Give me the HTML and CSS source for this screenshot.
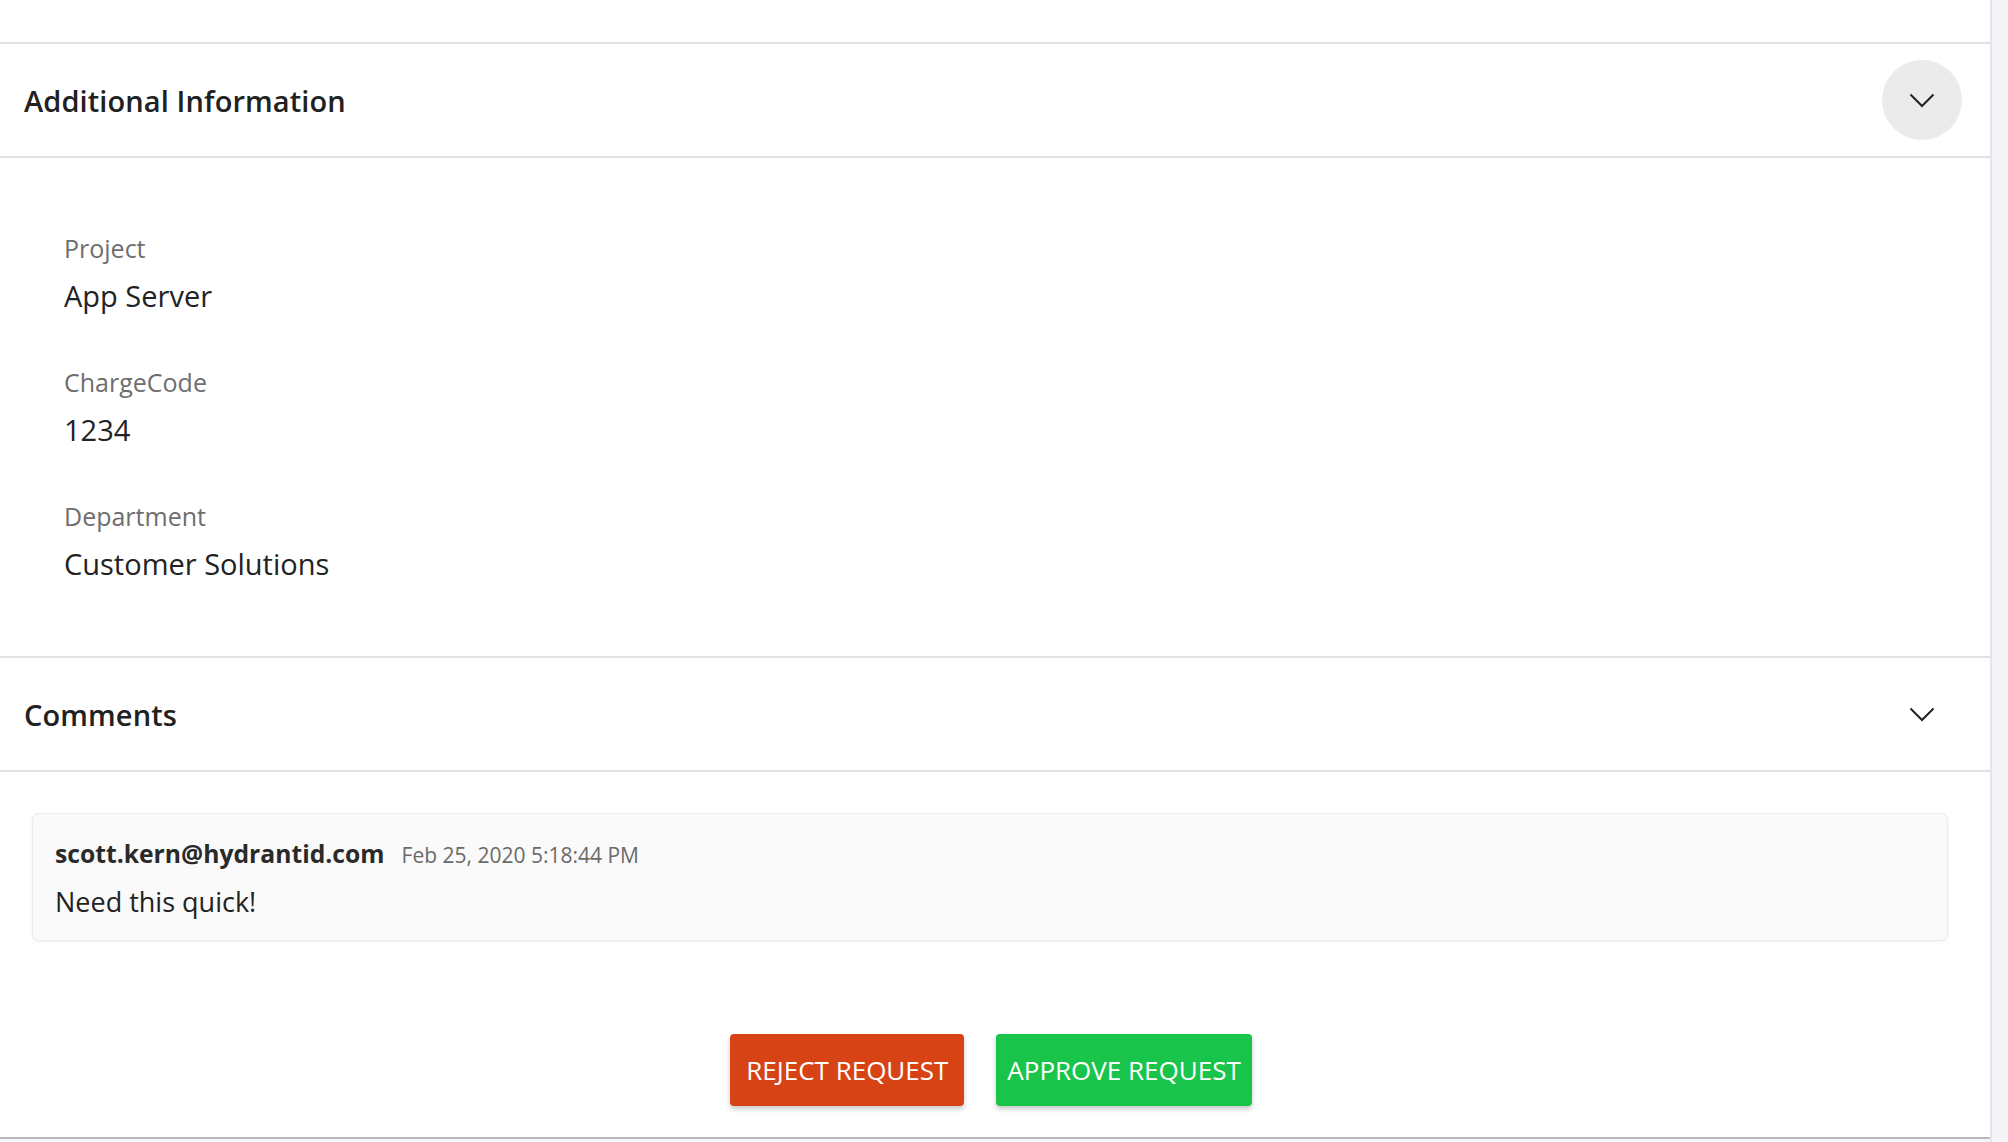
FILE: index.html
```html
<!DOCTYPE html>
<html lang="en">
<head>
<meta charset="utf-8">
<title>Request</title>
<link rel="stylesheet" href="styles.css">
</head>
<body>
<div class="layout">
  <main class="panel">
    <div class="top-gap"></div>

    <section class="section">
      <header class="section-header">
        <h2 class="section-title">Additional Information</h2>
        <button class="toggle toggle-active" aria-label="Collapse">
          <svg class="chevron" viewBox="0 0 26 15" width="26" height="15"><path d="M1.5 1.5 L13 13 L24.5 1.5" fill="none" stroke="#222" stroke-width="2"/></svg>
        </button>
      </header>
      <div class="info-body">
        <div class="field">
          <div class="field-label">Project</div>
          <div class="field-value">App Server</div>
        </div>
        <div class="field">
          <div class="field-label">ChargeCode</div>
          <div class="field-value">1234</div>
        </div>
        <div class="field">
          <div class="field-label">Department</div>
          <div class="field-value">Customer Solutions</div>
        </div>
      </div>
    </section>

    <section class="section">
      <header class="section-header">
        <h2 class="section-title">Comments</h2>
        <button class="toggle" aria-label="Collapse">
          <svg class="chevron" viewBox="0 0 26 15" width="26" height="15"><path d="M1.5 1.5 L13 13 L24.5 1.5" fill="none" stroke="#222" stroke-width="2"/></svg>
        </button>
      </header>
      <div class="comments-body">
        <div class="comment">
          <div class="comment-meta">
            <span class="comment-author">scott.kern@hydrantid.com</span>
            <span class="comment-date">Feb 25, 2020 5:18:44 PM</span>
          </div>
          <div class="comment-text">Need this quick!</div>
        </div>
      </div>
    </section>

    <div class="actions">
      <button class="btn btn-reject">REJECT REQUEST</button>
      <button class="btn btn-approve">APPROVE REQUEST</button>
    </div>
  </main>
  <aside class="rail"></aside>
</div>
</body>
</html>
```
FILE: styles.css
```css
* { box-sizing: border-box; }

html, body {
  margin: 0;
  padding: 0;
  height: 100%;
}

body {
  font-family: "Open Sans", "Noto Sans", "Liberation Sans", sans-serif;
  color: #222;
  background: #f4f5f9;
  overflow: hidden;
}

.layout {
  display: flex;
  height: 1142px;
  align-items: flex-start;
}

.panel {
  flex: 1;
  background: #fff;
  display: flex;
  flex-direction: column;
  border-bottom: 2px solid #b9b9b9;
  height: 1139px;
}

.rail {
  width: 18px;
  height: 100%;
  background: #f4f5f9;
  border-left: 2px solid #e5e6ea;
}

.top-gap {
  height: 42px;
}

.section {
  border-top: 2px solid #e2e2e2;
}

.section-header {
  height: 114px;
  display: flex;
  align-items: center;
  justify-content: space-between;
  padding: 2px 28px 0 24px;
  border-bottom: 2px solid #e2e2e2;
}

.section-title {
  margin: 0;
  font-size: 29px;
  line-height: 40px;
  font-weight: 600;
  color: #212121;
  letter-spacing: 0.1px;
}

.toggle {
  width: 80px;
  height: 80px;
  border-radius: 50%;
  border: none;
  padding: 0;
  background: transparent;
  display: flex;
  align-items: center;
  justify-content: center;
  margin-top: -2px;
}

.toggle-active {
  background: #ebebeb;
}

.chevron {
  display: block;
  width: 26px;
  height: 15px;
}

.info-body {
  padding: 72px 64px 72px;
  display: flex;
  flex-direction: column;
  gap: 48px;
}

.field-label {
  font-size: 25px;
  line-height: 36px;
  color: #6e6e6e;
}

.field-value {
  margin-top: 10px;
  font-size: 29px;
  line-height: 40px;
  color: #222;
}

.comments-body {
  padding: 41px 42px 0 32px;
}

.comment {
  background: #fafafa;
  border: 1px solid #ececec;
  border-radius: 7px;
  box-shadow: 0 1px 3px rgba(0, 0, 0, 0.06);
  padding: 22px 22px 20px;
  height: 128px;
}

.comment-meta {
  display: flex;
  align-items: baseline;
  gap: 17px;
  line-height: 36px;
}

.comment-author {
  font-size: 24.7px;
  font-weight: 700;
  color: #2a2a2a;
}

.comment-date {
  font-size: 21px;
  color: #6a6a6a;
}

.comment-text {
  margin-top: 10px;
  font-size: 27px;
  line-height: 38px;
  color: #222;
}

.actions {
  display: flex;
  justify-content: center;
  gap: 32px;
  margin-top: 93px;
  padding-right: 8px;
}

.btn {
  height: 72px;
  padding: 0 16px;
  border: none;
  border-radius: 4px;
  font-family: "Open Sans", "Noto Sans", "Liberation Sans", sans-serif;
  font-size: 26px;
  font-weight: 400;
  color: #fff;
  box-shadow: 0 3px 5px rgba(0, 0, 0, 0.22);
}

.btn-reject {
  background: #d84315;
}

.btn-approve {
  background: #18c44a;
  padding: 0 11px;
}
```
